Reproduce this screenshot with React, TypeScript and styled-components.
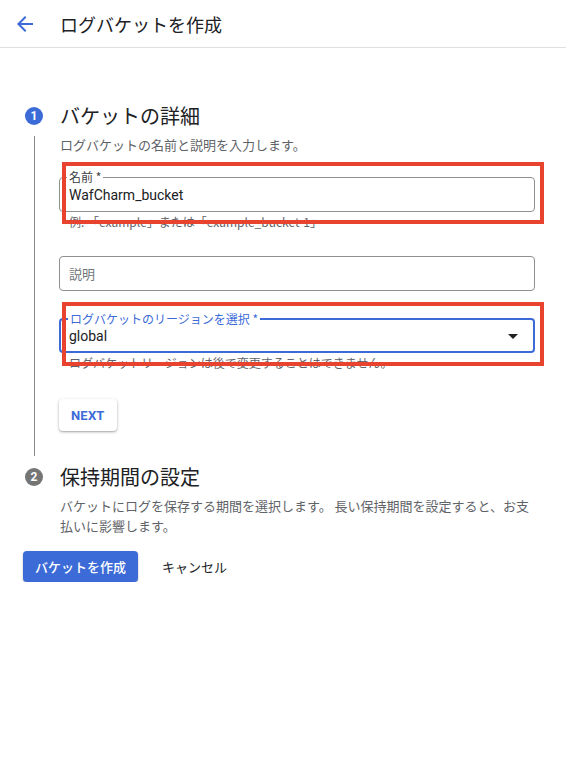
import React from "react";
import styled, { createGlobalStyle } from "styled-components";

const BLUE = "#3c6bd8";
const RED = "#e8432e";

const GlobalStyle = createGlobalStyle`
  html, body {
    margin: 0;
    padding: 0;
    background: #ffffff;
  }
  body {
    font-family: Roboto, "Noto Sans CJK JP", "Noto Sans", sans-serif;
    color: #202124;
  }
`;

const Header = styled.header`
  height: 47px;
  display: flex;
  align-items: center;
  border-bottom: 1px solid #e0e0e0;
  padding-left: 13px;
`;

const BackButton = styled.button`
  width: 24px;
  height: 24px;
  padding: 0;
  border: none;
  background: none;
  display: flex;
  align-items: center;
  justify-content: center;
  cursor: pointer;
  margin-right: 23px;
  margin-top: 1px;
`;

const HeaderTitle = styled.h1`
  margin: 0;
  font-family: "Noto Sans CJK JP", sans-serif;
  font-size: 18px;
  font-weight: 400;
  color: #202124;
  line-height: 24px;
`;

const Page = styled.main`
  padding: 54px 31px 0 23px;
`;

const Step = styled.section`
  display: grid;
  grid-template-columns: 22px 1fr;
  column-gap: 15px;
`;

const Indicator = styled.div`
  display: flex;
  flex-direction: column;
  align-items: center;
  padding-top: 5px;
`;

const StepNumber = styled.div<{ $active?: boolean }>`
  width: 18px;
  height: 18px;
  border-radius: 50%;
  background: ${({ $active }) => ($active ? BLUE : "#757575")};
  color: #ffffff;
  font-family: Roboto, sans-serif;
  font-size: 12px;
  font-weight: 700;
  display: flex;
  align-items: center;
  justify-content: center;
  flex-shrink: 0;
`;

const StepLine = styled.div`
  flex: 1;
  width: 1px;
  background: #8a8a8a;
  margin: 11px 0 7px;
`;

const StepBody = styled.div<{ $last?: boolean }>`
  padding-bottom: ${({ $last }) => ($last ? "0" : "32px")};
`;

const StepTitle = styled.h2`
  margin: 0;
  font-family: "Noto Sans CJK JP", sans-serif;
  font-size: 20px;
  font-weight: 400;
  line-height: 28px;
  color: #202124;
`;

const StepDescription = styled.p<{ $gap: number }>`
  margin: ${({ $gap }) => $gap}px 0 0;
  font-family: "Noto Sans CJK JP", sans-serif;
  font-size: 13px;
  line-height: 20px;
  color: #5f6368;
`;

const FieldGroup = styled.div<{ $gap: number }>`
  position: relative;
  margin-top: ${({ $gap }) => $gap}px;
`;

const Outlined = styled.div<{ $focused?: boolean }>`
  position: relative;
  height: 35px;
  box-sizing: border-box;
  border: ${({ $focused }) => ($focused ? `2px solid ${BLUE}` : "1px solid #8f8f8f")};
  border-radius: 4px;
  display: flex;
  align-items: center;
  padding: 0 ${({ $focused }) => ($focused ? "15px 0 8px" : "14px 0 9px")};
  margin-left: -1px;
`;

const FloatLabel = styled.span<{ $focused?: boolean }>`
  position: absolute;
  top: -9px;
  left: 7px;
  padding: 0 2px;
  background: #ffffff;
  font-family: "Noto Sans CJK JP", sans-serif;
  font-size: 12px;
  line-height: 16px;
  color: ${({ $focused }) => ($focused ? BLUE : "#3c4043")};
`;

const Value = styled.span`
  flex: 1;
  font-family: Roboto, sans-serif;
  font-size: 14px;
  color: #202124;
`;

const Placeholder = styled.span`
  flex: 1;
  font-family: "Noto Sans CJK JP", sans-serif;
  font-size: 13px;
  color: #70757a;
`;

const Caret = styled.span`
  width: 0;
  height: 0;
  border-left: 5px solid transparent;
  border-right: 5px solid transparent;
  border-top: 5px solid #202124;
  margin-top: 1px;
`;

const Helper = styled.div`
  margin-top: 2px;
  padding-left: 9px;
  font-family: "Noto Sans CJK JP", Roboto, sans-serif;
  font-size: 12px;
  line-height: 16px;
  color: #5f6368;
`;

const Highlight = styled.div<{ $top: number; $bottom: number }>`
  position: absolute;
  top: ${({ $top }) => $top}px;
  bottom: ${({ $bottom }) => $bottom}px;
  left: 2px;
  right: -9px;
  border: 4px solid ${RED};
  pointer-events: none;
`;

const NextButton = styled.button`
  margin-top: 28px;
  height: 32px;
  padding: 0 12px;
  margin-left: -1px;
  border: none;
  border-radius: 4px;
  background: #ffffff;
  box-shadow: 0 1px 3px rgba(0, 0, 0, 0.3), 0 1px 1px rgba(0, 0, 0, 0.1);
  color: ${BLUE};
  font-family: Roboto, sans-serif;
  font-size: 13px;
  font-weight: 700;
  letter-spacing: 0.2px;
  cursor: pointer;
`;

const Actions = styled.div`
  display: flex;
  align-items: center;
  gap: 12px;
  margin-top: 15px;
`;

const Button = styled.button<{ $primary?: boolean }>`
  height: 31px;
  padding: 0 12px;
  border: none;
  border-radius: 4px;
  background: ${({ $primary }) => ($primary ? BLUE : "transparent")};
  color: ${({ $primary }) => ($primary ? "#ffffff" : "#202124")};
  box-shadow: ${({ $primary }) => ($primary ? "0 1px 2px rgba(0,0,0,0.3)" : "none")};
  font-family: "Noto Sans CJK JP", sans-serif;
  font-size: 13px;
  font-weight: ${({ $primary }) => ($primary ? 500 : 400)};
  cursor: pointer;
`;

const ArrowBack = () => (
  <svg width="24" height="24" viewBox="0 0 24 24" fill={BLUE}>
    <path d="M20 11H7.83l5.59-5.59L12 4l-8 8 8 8 1.41-1.41L7.83 13H20v-2z" />
  </svg>
);

export default function App() {
  return (
    <>
      <GlobalStyle />
      <Header>
        <BackButton aria-label="戻る">
          <ArrowBack />
        </BackButton>
        <HeaderTitle>ログバケットを作成</HeaderTitle>
      </Header>
      <Page>
        <Step>
          <Indicator>
            <StepNumber $active>1</StepNumber>
            <StepLine />
          </Indicator>
          <StepBody>
            <StepTitle>バケットの詳細</StepTitle>
            <StepDescription $gap={5}>ログバケットの名前と説明を入力します。</StepDescription>

            <FieldGroup $gap={22}>
              <Outlined>
                <FloatLabel>名前 *</FloatLabel>
                <Value>WafCharm_bucket</Value>
              </Outlined>
              <Helper>例: 「example」または「example_bucket-1」</Helper>
              <Highlight $top={-15} $bottom={6} />
            </FieldGroup>

            <FieldGroup $gap={26}>
              <Outlined>
                <Placeholder>説明</Placeholder>
              </Outlined>
            </FieldGroup>

            <FieldGroup $gap={27}>
              <Outlined $focused>
                <FloatLabel $focused>ログバケットのリージョンを選択 *</FloatLabel>
                <Value>global</Value>
                <Caret />
              </Outlined>
              <Helper>ログバケットリージョンは後で変更することはできません。</Helper>
              <Highlight $top={-16} $bottom={5} />
            </FieldGroup>

            <NextButton>NEXT</NextButton>
          </StepBody>
        </Step>

        <Step>
          <Indicator>
            <StepNumber>2</StepNumber>
          </Indicator>
          <StepBody $last>
            <StepTitle>保持期間の設定</StepTitle>
            <StepDescription $gap={5}>
              バケットにログを保存する期間を選択します。 長い保持期間を設定すると、お支払いに影響します。
            </StepDescription>
          </StepBody>
        </Step>

        <Actions>
          <Button $primary>バケットを作成</Button>
          <Button>キャンセル</Button>
        </Actions>
      </Page>
    </>
  );
}
